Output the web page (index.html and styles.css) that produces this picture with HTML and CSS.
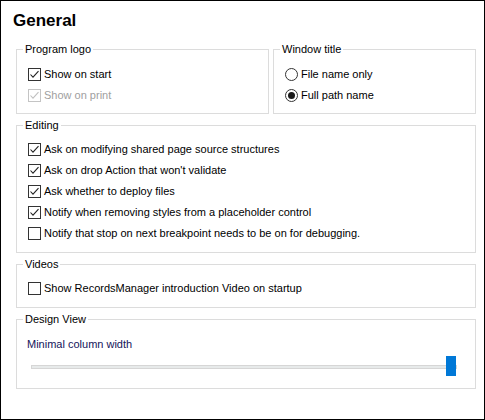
FILE: index.html
```html
<!DOCTYPE html>
<html>
<head>
<meta charset="utf-8">
<link rel="stylesheet" href="styles.css">
</head>
<body>
<div class="window">
  <h1 class="title">General</h1>
  <div class="row-top">
    <fieldset class="group group-logo">
      <legend>Program logo</legend>
      <div class="content content-first">
        <label class="opt"><span class="cb checked"><svg viewBox="0 0 13 13"><polyline points="2.5,6.5 5,9.2 10.5,3.2"/></svg></span>Show on start</label>
        <label class="opt disabled"><span class="cb checked"><svg viewBox="0 0 13 13"><polyline points="2.5,6.5 5,9.2 10.5,3.2"/></svg></span>Show on print</label>
      </div>
    </fieldset>
    <fieldset class="group group-title">
      <legend>Window title</legend>
      <div class="content content-first">
        <label class="opt"><span class="rb"></span>File name only</label>
        <label class="opt"><span class="rb on"></span>Full path name</label>
      </div>
    </fieldset>
  </div>
  <fieldset class="group">
    <legend>Editing</legend>
    <div class="content">
      <label class="opt"><span class="cb checked"><svg viewBox="0 0 13 13"><polyline points="2.5,6.5 5,9.2 10.5,3.2"/></svg></span>Ask on modifying shared page source structures</label>
      <label class="opt"><span class="cb checked"><svg viewBox="0 0 13 13"><polyline points="2.5,6.5 5,9.2 10.5,3.2"/></svg></span>Ask on drop Action that won't validate</label>
      <label class="opt"><span class="cb checked"><svg viewBox="0 0 13 13"><polyline points="2.5,6.5 5,9.2 10.5,3.2"/></svg></span>Ask whether to deploy files</label>
      <label class="opt"><span class="cb checked"><svg viewBox="0 0 13 13"><polyline points="2.5,6.5 5,9.2 10.5,3.2"/></svg></span>Notify when removing styles from a placeholder control</label>
      <label class="opt"><span class="cb"></span>Notify that stop on next breakpoint needs to be on for debugging.</label>
    </div>
  </fieldset>
  <fieldset class="group">
    <legend>Videos</legend>
    <div class="content">
      <label class="opt"><span class="cb"></span>Show RecordsManager introduction Video on startup</label>
    </div>
  </fieldset>
  <fieldset class="group">
    <legend>Design View</legend>
    <div class="content content-design">
      <div class="label">Minimal column width</div>
      <div class="slider">
        <div class="track"></div>
        <div class="thumb"></div>
      </div>
    </div>
  </fieldset>
</div>
</body>
</html>
```
FILE: styles.css
```css
html, body {
  margin: 0;
  padding: 0;
  background: #fff;
}
.window {
  width: 485px;
  height: 420px;
  box-sizing: border-box;
  border: 1px solid #000;
  background: #fff;
  padding: 10px 8px 0 15px;
  font-family: "Liberation Sans", Arial, sans-serif;
  font-size: 11px;
  color: #000;
  display: flex;
  flex-direction: column;
  gap: 5px;
}
.title {
  margin: 0 0 7px -3px;
  font-size: 17px;
  line-height: 20px;
  font-weight: bold;
  color: #000;
}
.row-top {
  display: flex;
  gap: 4px;
}
.group {
  margin: 0;
  padding: 0;
  min-width: 0;
  border: 1px solid #dcdcdc;
}
.group-logo {
  width: 253px;
  box-sizing: border-box;
}
.group-title {
  flex: 1;
}
.group legend {
  margin-left: 6px;
  padding: 0 2px;
  font-size: 11px;
  line-height: 13px;
}
.content {
  padding: 7px 11px 8px;
  display: flex;
  flex-direction: column;
}
.content-first {
  padding-top: 8px;
  padding-bottom: 7px;
}
.opt {
  display: flex;
  align-items: center;
  gap: 3px;
  height: 21px;
  line-height: 13px;
  white-space: nowrap;
}
.opt.disabled {
  color: #a0a0a0;
}
.cb {
  width: 13px;
  height: 13px;
  box-sizing: border-box;
  border: 1px solid #333;
  background: #fff;
  flex: none;
  position: relative;
}
.cb svg {
  position: absolute;
  left: -1px;
  top: -1px;
  width: 13px;
  height: 13px;
}
.cb polyline {
  fill: none;
  stroke: #222;
  stroke-width: 1.1;
}
.disabled .cb {
  border-color: #c4c4c4;
}
.disabled .cb polyline {
  stroke: #c0c0c0;
}
.rb {
  width: 13px;
  height: 13px;
  box-sizing: border-box;
  border: 1px solid #333;
  border-radius: 50%;
  background: #fff;
  flex: none;
  display: flex;
  align-items: center;
  justify-content: center;
}
.rb.on::after {
  content: "";
  width: 7px;
  height: 7px;
  border-radius: 50%;
  background: #1a1a1a;
}
.content-design {
  padding: 12px 18px 12px 10px;
}
.label {
  line-height: 13px;
  color: #14145a;
}
.slider {
  position: relative;
  height: 20px;
  margin: 5px 0 0 4px;
}
.track {
  position: absolute;
  left: 0;
  right: 0;
  top: 9px;
  height: 4px;
  box-sizing: border-box;
  background: #e7eaea;
  border: 1px solid #d6d6d6;
}
.thumb {
  position: absolute;
  right: 1px;
  top: 0;
  width: 10px;
  height: 20px;
  background: #0078d7;
}
```
